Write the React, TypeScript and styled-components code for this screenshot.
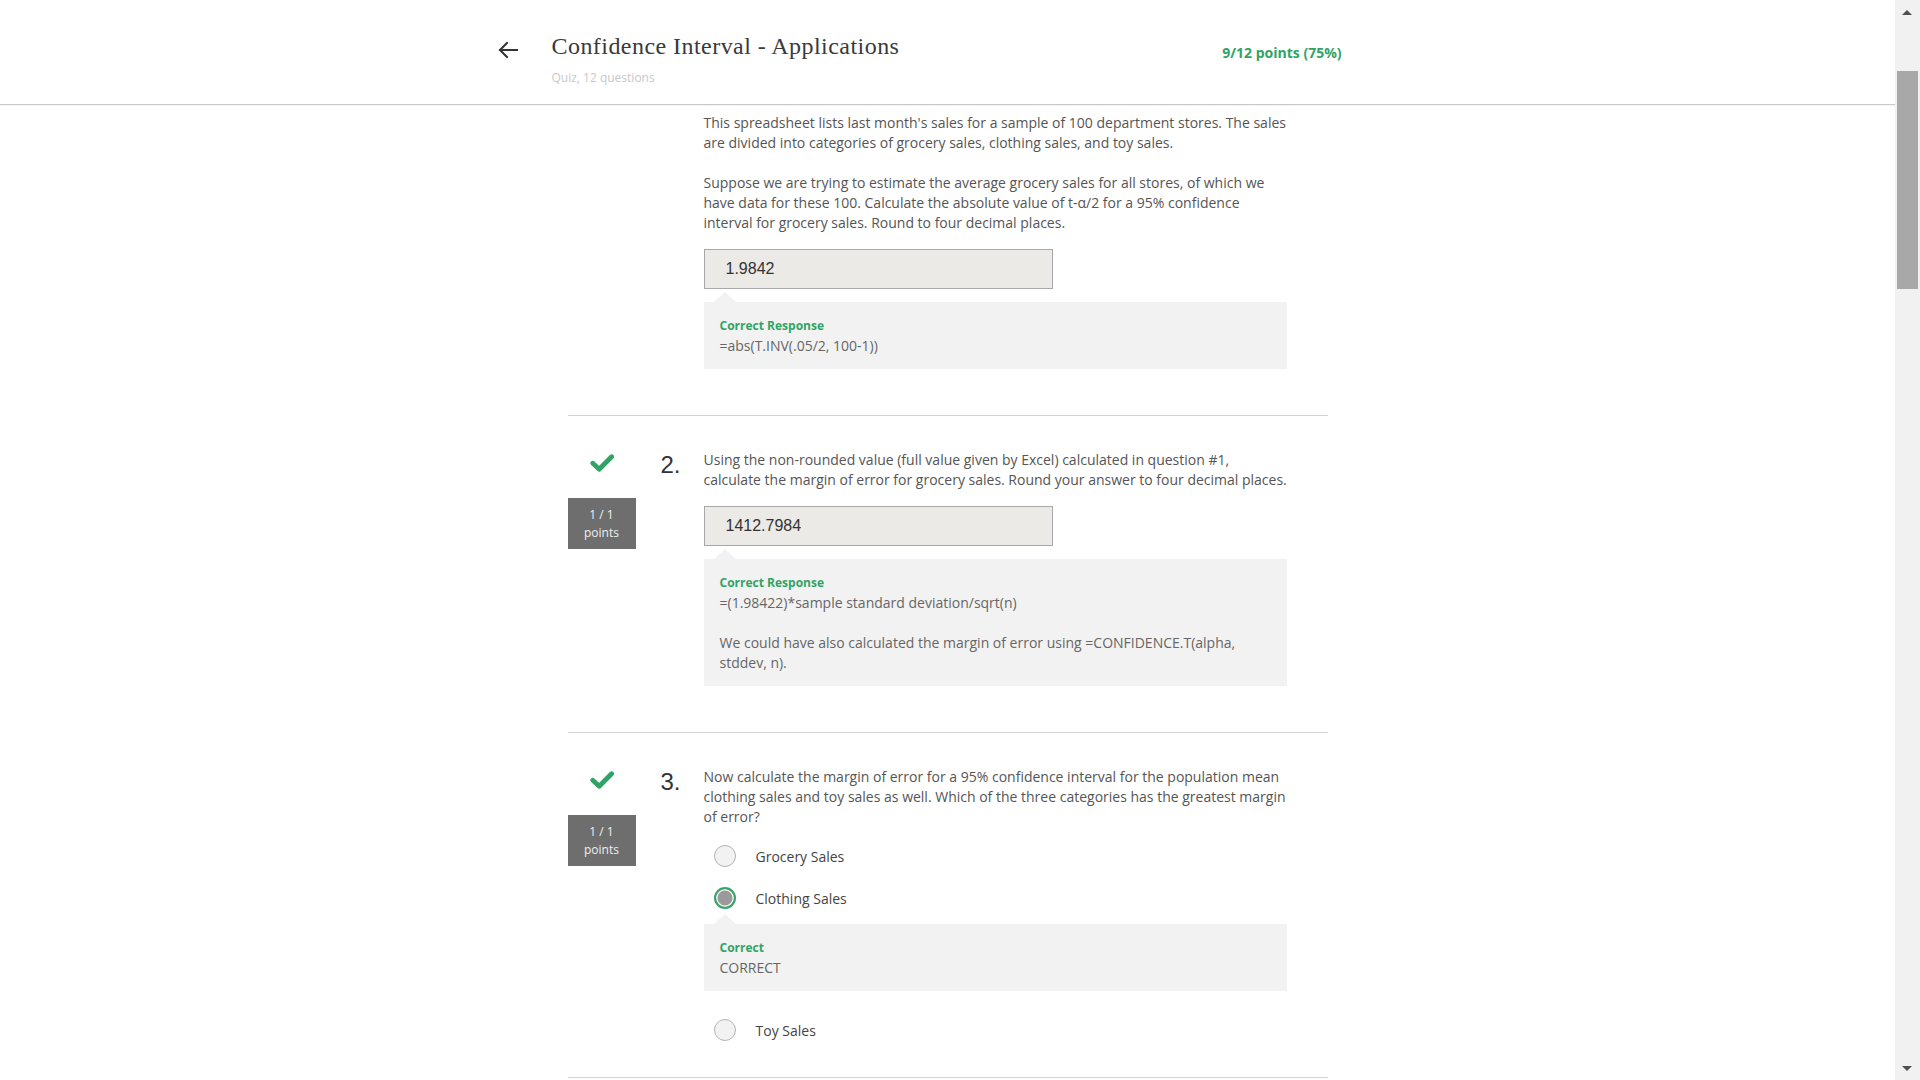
import React from "react";
import styled, { createGlobalStyle, css } from "styled-components";

const GlobalStyle = createGlobalStyle`
  html, body {
    margin: 0;
    padding: 0;
    overflow: hidden;
    background: #ffffff;
  }
  body {
    font-family: "Open Sans", "Liberation Sans", sans-serif;
    color: #555;
  }
  * { box-sizing: border-box; }
`;

const GREEN = "#30a466";

const Page = styled.div`
  width: 1895px;
  height: 1080px;
  display: flex;
  flex-direction: column;
`;

const Header = styled.header`
  flex: none;
  height: 105px;
  border-bottom: 1px solid #c9c9c9;
  box-shadow: 0 1px 1px rgba(0, 0, 0, 0.04);
  display: flex;
  justify-content: center;
`;

const HeaderInner = styled.div`
  width: 904px;
  display: flex;
  align-items: flex-start;
  padding-top: 28px;
`;

const BackButton = styled.div`
  width: 24px;
  height: 24px;
  margin-top: 10px;
  color: #333;
  display: flex;
`;

const TitleBlock = styled.div`
  margin-left: 32px;
  flex: 1;
  display: flex;
  flex-direction: column;
`;

const Title = styled.h1`
  margin: 0;
  font-family: "Liberation Serif", "DejaVu Serif", serif;
  font-weight: 400;
  font-size: 24px;
  line-height: 36px;
  color: #3a3a3a;
  letter-spacing: 0.45px;
`;

const Subtitle = styled.div`
  margin-top: 6px;
  font-size: 12px;
  line-height: 16px;
  color: #c8c8c8;
`;

const Score = styled.div`
  margin-top: 15px;
  margin-right: 58px;
  font-size: 14px;
  line-height: 20px;
  font-weight: 700;
  color: ${GREEN};
`;

const Main = styled.main`
  display: flex;
  justify-content: center;
`;

const Column = styled.div`
  width: 760px;
  display: flex;
  flex-direction: column;
`;

const Section = styled.section<{ $first?: boolean }>`
  flex: none;
  display: flex;
  padding: ${(p) => (p.$first ? "8px" : "34px")} 0 26px;
  border-bottom: 1px solid #d3d3d3;
`;

const Side = styled.div`
  width: 68px;
  margin-right: 25px;
  display: flex;
  flex-direction: column;
  align-items: center;
`;

const CheckIcon = styled.div`
  width: 24px;
  height: 18px;
  margin-top: 4px;
  display: flex;
`;

const Badge = styled.div`
  margin-top: 26px;
  width: 68px;
  padding: 8px 0;
  background: #6e6e6e;
  color: #eeeeee;
  font-size: 12px;
  line-height: 17.5px;
  text-align: center;
`;

const Num = styled.div`
  width: 43px;
  font-family: "Liberation Sans", Arial, sans-serif;
  font-size: 24px;
  line-height: 30px;
  color: #333;
`;

const Body = styled.div`
  width: 583px;
  display: flex;
  flex-direction: column;
`;

const Para = styled.p`
  margin: 0;
  font-size: 14px;
  line-height: 20px;
  color: #555;
  white-space: nowrap;
  & + & {
    margin-top: 20px;
  }
`;

const AnswerInput = styled.div`
  margin-top: 16px;
  width: 349px;
  height: 40px;
  border: 1px solid #a8a8a8;
  background: #ebeae6;
  padding-left: 21px;
  display: flex;
  align-items: center;
  font-family: "Liberation Sans", Arial, sans-serif;
  font-size: 16px;
  color: #333;
`;

const Feedback = styled.div<{ $tight?: boolean }>`
  position: relative;
  margin-top: ${(p) => (p.$tight ? "5px" : "13px")};
  margin-bottom: ${(p) => (p.$tight ? "18px" : "20px")};
  background: #f2f2f2;
  padding: 13.5px 16px;
  font-size: 14px;
  line-height: 20px;
  color: #666;
  white-space: nowrap;
  &::before {
    content: "";
    position: absolute;
    left: 10px;
    top: -10px;
    border-left: 11px solid transparent;
    border-right: 11px solid transparent;
    border-bottom: 10px solid #f2f2f2;
  }
`;

const FeedbackLabel = styled.div`
  font-size: 12px;
  font-weight: 700;
  color: ${GREEN};
`;

const FeedbackText = styled.div<{ $spaced?: boolean }>`
  ${(p) =>
    p.$spaced &&
    css`
      margin-top: 20px;
    `}
`;

const Options = styled.div`
  margin-top: 8px;
  display: flex;
  flex-direction: column;
`;

const Option = styled.div`
  height: 42px;
  padding-left: 10px;
  display: flex;
  align-items: center;
  gap: 20px;
  font-size: 14px;
  color: #444;
`;

const Radio = styled.span<{ $checked?: boolean }>`
  width: 22px;
  height: 22px;
  border-radius: 50%;
  flex: none;
  ${(p) =>
    p.$checked
      ? css`
          border: 2.5px solid #35a56a;
          background: #9a9a9a;
          box-shadow: inset 0 0 0 1.5px #f4f4f4;
        `
      : css`
          border: 1px solid #b4b4b4;
          background: #f2f2f2;
        `}
`;

const Scrollbar = styled.div`
  position: fixed;
  top: 0;
  right: 0;
  width: 25px;
  height: 1080px;
  background: #f1f1f1;
`;

const Thumb = styled.div`
  position: absolute;
  top: 71px;
  left: 2px;
  width: 21px;
  height: 218px;
  background: #a8a8a8;
`;

const Arrow = styled.div<{ $down?: boolean }>`
  position: absolute;
  left: 7px;
  width: 0;
  height: 0;
  border-left: 5px solid transparent;
  border-right: 5px solid transparent;
  ${(p) =>
    p.$down
      ? css`
          bottom: 9px;
          border-top: 5px solid #505050;
        `
      : css`
          top: 10px;
          border-bottom: 5px solid #505050;
        `}
`;

const BackArrow = () => (
  <svg width="24" height="24" viewBox="0 0 24 24" fill="none" stroke="#333" strokeWidth="2" strokeLinecap="square">
    <path d="M21 12H4" />
    <path d="M11 5l-7 7 7 7" strokeLinejoin="miter" />
  </svg>
);

const Check = () => (
  <svg width="24" height="18" viewBox="0 0 24 18">
    <path d="M2.8 9.2l6.4 6L21.6 2.8" fill="none" stroke={GREEN} strokeWidth="4.8" strokeLinecap="round" strokeLinejoin="round" />
  </svg>
);

const SideInfo = () => (
  <Side>
    <CheckIcon>
      <Check />
    </CheckIcon>
    <Badge>
      1 / 1
      <br />
      points
    </Badge>
  </Side>
);

export default function App() {
  return (
    <>
      <GlobalStyle />
      <Page>
        <Header>
          <HeaderInner>
            <BackButton>
              <BackArrow />
            </BackButton>
            <TitleBlock>
              <Title>Confidence Interval - Applications</Title>
              <Subtitle>Quiz, 12 questions</Subtitle>
            </TitleBlock>
            <Score>9/12 points (75%)</Score>
          </HeaderInner>
        </Header>
        <Main>
          <Column>
            <Section $first>
              <Side />
              <Num />
              <Body>
                <Para>
                  This spreadsheet lists last month's sales for a sample of 100 department stores. The sales
                  <br />
                  are divided into categories of grocery sales, clothing sales, and toy sales.
                </Para>
                <Para>
                  Suppose we are trying to estimate the average grocery sales for all stores, of which we
                  <br />
                  have data for these 100. Calculate the absolute value of t-α/2 for a 95% confidence
                  <br />
                  interval for grocery sales. Round to four decimal places.
                </Para>
                <AnswerInput>1.9842</AnswerInput>
                <Feedback>
                  <FeedbackLabel>Correct Response</FeedbackLabel>
                  <FeedbackText>=abs(T.INV(.05/2, 100-1))</FeedbackText>
                </Feedback>
              </Body>
            </Section>

            <Section>
              <SideInfo />
              <Num>2.</Num>
              <Body>
                <Para>
                  Using the non-rounded value (full value given by Excel) calculated in question #1,
                  <br />
                  calculate the margin of error for grocery sales. Round your answer to four decimal places.
                </Para>
                <AnswerInput>1412.7984</AnswerInput>
                <Feedback>
                  <FeedbackLabel>Correct Response</FeedbackLabel>
                  <FeedbackText>=(1.98422)*sample standard deviation/sqrt(n)</FeedbackText>
                  <FeedbackText $spaced>
                    We could have also calculated the margin of error using =CONFIDENCE.T(alpha,
                    <br />
                    stddev, n).
                  </FeedbackText>
                </Feedback>
              </Body>
            </Section>

            <Section>
              <SideInfo />
              <Num>3.</Num>
              <Body>
                <Para>
                  Now calculate the margin of error for a 95% confidence interval for the population mean
                  <br />
                  clothing sales and toy sales as well. Which of the three categories has the greatest margin
                  <br />
                  of error?
                </Para>
                <Options>
                  <Option>
                    <Radio />
                    Grocery Sales
                  </Option>
                  <Option>
                    <Radio $checked />
                    Clothing Sales
                  </Option>
                  <Feedback $tight>
                    <FeedbackLabel>Correct</FeedbackLabel>
                    <FeedbackText>CORRECT</FeedbackText>
                  </Feedback>
                  <Option>
                    <Radio />
                    Toy Sales
                  </Option>
                </Options>
              </Body>
            </Section>
          </Column>
        </Main>
      </Page>
      <Scrollbar>
        <Arrow />
        <Thumb />
        <Arrow $down />
      </Scrollbar>
    </>
  );
}
